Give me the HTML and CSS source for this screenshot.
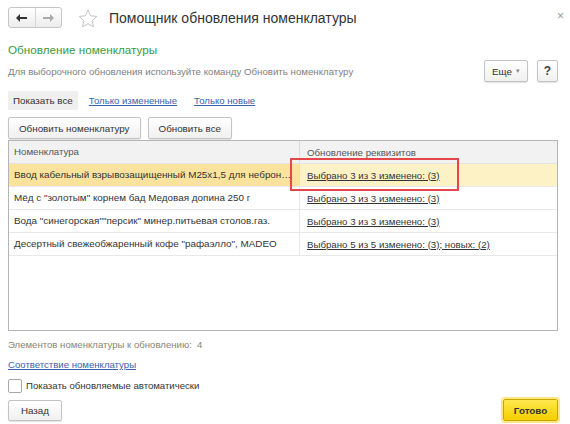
FILE: index.html
```html
<!DOCTYPE html>
<html lang="ru">
<head>
<meta charset="utf-8">
<link rel="stylesheet" href="styles.css">
</head>
<body>
<div class="window">
  <div class="titlebar">
    <div class="nav">
      <span class="nav-btn"><svg width="11" height="8" viewBox="0 0 11 8"><path d="M0 4 L4 0 L4 3 L11 3 L11 5 L4 5 L4 8 Z" fill="#333"/></svg></span>
      <span class="nav-btn"><svg width="11" height="8" viewBox="0 0 11 8"><path d="M11 4 L7 0 L7 3 L0 3 L0 5 L7 5 L7 8 Z" fill="#aaa"/></svg></span>
    </div>
    <svg class="star" width="20" height="19" viewBox="0 0 20 19"><path d="M10 1 L12.6 6.8 L18.9 7.4 L14.1 11.6 L15.5 17.8 L10 14.6 L4.5 17.8 L5.9 11.6 L1.1 7.4 L7.4 6.8 Z" fill="none" stroke="#c4c4c4" stroke-width="1"/></svg>
    <h1 class="title">Помощник обновления номенклатуры</h1>
    <span class="close">×</span>
  </div>

  <div class="section-title">Обновление номенклатуры</div>
  <div class="help-row">
    <span class="help">Для выборочного обновления используйте команду Обновить номенклатуру</span>
    <div class="help-buttons">
      <span class="btn btn-more">Еще <span class="caret">▾</span></span>
      <span class="btn btn-q">?</span>
    </div>
  </div>

  <div class="filters">
    <span class="filter active">Показать все</span>
    <span class="filter link">Только измененные</span>
    <span class="filter link">Только новые</span>
  </div>

  <div class="actions">
    <span class="btn btn-act">Обновить номенклатуру</span>
    <span class="btn btn-act">Обновить все</span>
  </div>

  <div class="table">
    <div class="row head">
      <div class="c1">Номенклатура</div>
      <div class="c2">Обновление реквизитов</div>
    </div>
    <div class="row sel">
      <div class="c1">Ввод кабельный взрывозащищенный М25х1,5 для небронированного кабеля</div>
      <div class="c2 marked"><span class="u">Выбрано 3 из 3 изменено: (3)</span><span class="mark"></span></div>
    </div>
    <div class="row">
      <div class="c1">Мёд с "золотым" корнем бад Медовая допина 250 г</div>
      <div class="c2"><span class="u">Выбрано 3 из 3 изменено: (3)</span></div>
    </div>
    <div class="row">
      <div class="c1">Вода "синегорская""персик" минер.питьевая столов.газ.</div>
      <div class="c2"><span class="u">Выбрано 3 из 3 изменено: (3)</span></div>
    </div>
    <div class="row">
      <div class="c1">Десертный свежеобжаренный кофе "рафаэлло", MADEO</div>
      <div class="c2"><span class="u">Выбрано 5 из 5 изменено: (3); новых: (2)</span></div>
    </div>
  </div>

  <div class="count">Элементов номенклатуры к обновлению:&nbsp;&nbsp;4</div>
  <div class="match"><span class="link">Соответствие номенклатуры</span></div>
  <label class="check"><span class="box"></span>Показать обновляемые автоматически</label>

  <div class="footer">
    <span class="btn btn-back">Назад</span>
    <span class="btn btn-done">Готово</span>
  </div>
</div>
</body>
</html>
```

FILE: styles.css
```css
* { box-sizing: border-box; }
html, body { margin: 0; padding: 0; background: #fff; }
body {
  width: 570px;
  height: 424px;
  font-family: "Liberation Sans", Arial, sans-serif;
  font-size: 9.6px;
  color: #333;
  overflow: hidden;
}
.window {
  padding: 0 12px 0 8px;
  display: flex;
  flex-direction: column;
}
.titlebar {
  display: flex;
  align-items: center;
  height: 34px;
  padding-top: 1px;
  position: relative;
}
.nav {
  display: flex;
  width: 54px;
  height: 21px;
  border: 1px solid #c6c6c6;
  border-radius: 3px;
  background: linear-gradient(#ffffff, #ececec);
}
.nav-btn {
  flex: 1;
  display: flex;
  align-items: center;
  justify-content: center;
}
.nav-btn + .nav-btn { border-left: 1px solid #d4d4d4; }
.star { margin-left: 16px; margin-top: 1px; }
.title {
  margin: 0 0 0 11px;
  font-weight: normal;
  font-size: 14px;
  color: #333;
}
.close {
  position: absolute;
  right: -6px;
  top: 9px;
  font-size: 12px;
  color: #999;
}
.section-title {
  margin-top: 9px;
  font-size: 11.7px;
  color: #3c9a3c;
  height: 15px;
}
.help-row {
  display: flex;
  justify-content: space-between;
  align-items: center;
  height: 24px;
  margin-top: 1px;
}
.help { color: #808080; font-size: 9.7px; }
.help-buttons { display: flex; gap: 9px; }
.btn {
  display: inline-flex;
  align-items: center;
  justify-content: center;
  border: 1px solid #c3c3c3;
  border-radius: 2px;
  background: linear-gradient(#ffffff, #f0f0f0);
  box-shadow: 0 1px 1px rgba(0,0,0,0.12);
  color: #333;
  font-size: 9.8px;
  height: 22px;
}
.btn-more { width: 44px; }
.caret { font-size: 7px; color: #888; margin-left: 4px; }
.btn-q { width: 21px; font-size: 12px; font-weight: bold; color: #444; }
.filters {
  display: flex;
  align-items: center;
  margin-top: 7px;
  height: 20px;
}
.filter { font-size: 9.6px; }
.filter.active {
  background: #efefef;
  padding: 3px 5px;
  height: 19px;
  line-height: 13px;
  color: #333;
  font-size: 9.8px;
}
.filter.link { margin-left: 11px; }
.filter.link + .filter.link { margin-left: 17px; }
.link { color: #3a62ad; text-decoration: underline; }
.actions {
  display: flex;
  gap: 7px;
  margin-top: 7px;
}
.btn-act { padding: 0 10px; height: 22px; }
.table {
  margin-top: 1px;
  height: 191px;
  border: 1px solid #b5b5b5;
  display: flex;
  flex-direction: column;
}
.row {
  display: flex;
  height: 23px;
  flex: none;
  align-items: stretch;
  border-bottom: 1px solid #e8e8e8;
}
.row > div {
  display: flex;
  align-items: center;
  white-space: nowrap;
  overflow: hidden;
}
.c1 { width: 290px; padding: 0 6px 0 5px; text-overflow: ellipsis; display: block !important; line-height: 22px; font-size: 9.9px; }
.head .c1 { font-size: 9.7px; }
.c2 { flex: 1; padding-left: 7px; border-left: 1px solid #e8e8e8; font-size: 9.7px; }
.head { background: #f2f2f2; color: #555; border-bottom: 1px solid #e2e2e2; }
.head .c2 { border-left: 1px solid #dcdcdc; }
.sel .c1 { background: #fbe39d; }
.sel .c2 { background: #fdf1c6; border-left: 1px solid #f3e2a8; }
.u { text-decoration: underline; color: #333; }
.marked { position: relative; overflow: visible !important; }
.mark {
  position: absolute;
  left: -10px;
  top: -6px;
  width: 169px;
  height: 33px;
  border: 2px solid #e5464a;
}
.count { margin-top: 8px; color: #8a8574; height: 13px; }
.match { margin-top: 7px; height: 13px; }
.check {
  display: flex;
  align-items: center;
  margin-top: 7px;
  height: 13px;
  color: #333;
}
.box {
  width: 14px;
  height: 14px;
  border: 1px solid #a8a8a8;
  border-radius: 2px;
  margin-right: 4px;
  background: #fff;
}
.footer {
  display: flex;
  justify-content: space-between;
  align-items: center;
  margin-top: 7px;
}
.btn-back { width: 54px; height: 21px; }
.btn-done {
  width: 55px;
  height: 22px;
  background: linear-gradient(#ffe94d, #f5cf00);
  border: 1px solid #c6a800;
  outline: 2px solid #ffe680;
  font-weight: bold;
  color: #333;
}
```
